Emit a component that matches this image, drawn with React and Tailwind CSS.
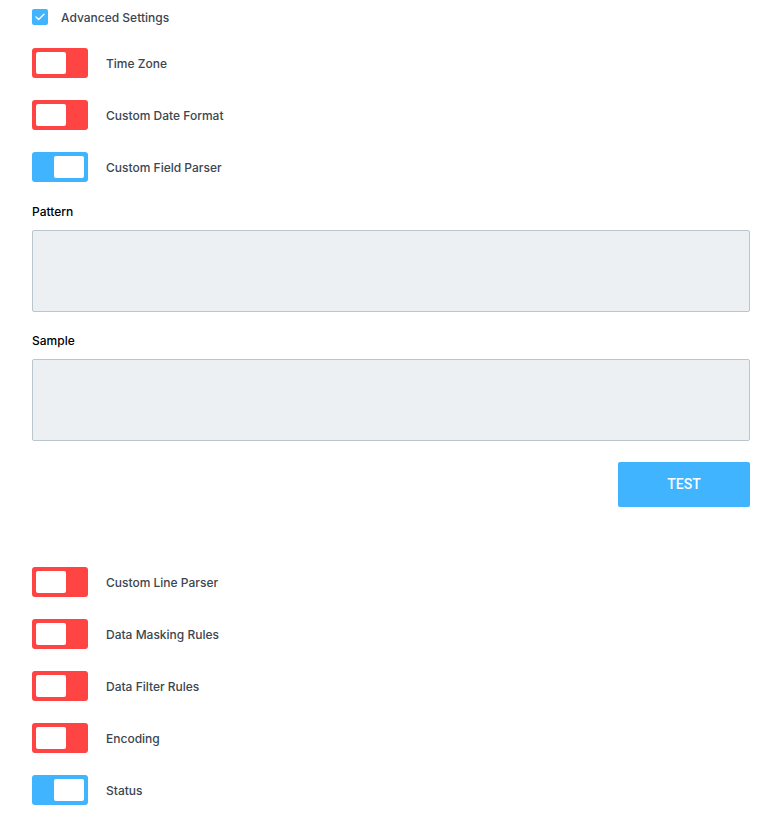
import React, { useState } from "react";

function Toggle({ on, label, onChange }) {
  return (
    <div className="flex items-center h-[30px]">
      <button
        onClick={onChange}
        className={
          "w-[56px] h-[30px] rounded-[3px] p-[4px] flex " +
          (on ? "bg-[#40b4ff] justify-end" : "bg-[#ff4444] justify-start")
        }
      >
        <span className="block w-[30px] h-[22px] bg-white rounded-[2px]" />
      </button>
      <span className="ml-[18px] mt-[1px] text-[12px] font-medium text-[#3b4650]">{label}</span>
    </div>
  );
}

export default function App() {
  const [flags, setFlags] = useState({
    tz: false,
    date: false,
    field: true,
    line: false,
    mask: false,
    filter: false,
    enc: false,
    status: true,
  });
  const flip = (k) => setFlags((f) => ({ ...f, [k]: !f[k] }));

  return (
    <div className="min-h-screen bg-white pl-8 pr-[28px] pt-[9px] pb-4 font-['Inter',sans-serif]">
      {/* Advanced settings checkbox */}
      <label className="flex items-center h-4">
        <span className="w-4 h-4 rounded-[2px] bg-[#40b4ff] flex items-center justify-center">
          <svg width="10" height="8" viewBox="0 0 10 8" fill="none">
            <path d="M1 4l2.6 2.6L9 1.2" stroke="white" strokeWidth="1.4" strokeLinecap="round" strokeLinejoin="round" />
          </svg>
        </span>
        <span className="ml-[13px] mt-[1px] text-[12px] font-medium text-[#3b4650]">Advanced Settings</span>
      </label>

      <div className="mt-[23px] flex flex-col gap-[22px]">
        <Toggle on={flags.tz} label="Time Zone" onChange={() => flip("tz")} />
        <Toggle on={flags.date} label="Custom Date Format" onChange={() => flip("date")} />
        <Toggle on={flags.field} label="Custom Field Parser" onChange={() => flip("field")} />
      </div>

      {/* Parser fields */}
      <div className="mt-[22px] text-[12px] font-medium text-black leading-4">Pattern</div>
      <textarea className="mt-[10px] block w-full h-[82px] bg-[#edf0f3] border border-[#b9c6cd] rounded-[2px] resize-none" />

      <div className="mt-[21px] text-[12px] font-medium text-black leading-4">Sample</div>
      <textarea className="mt-[10px] block w-full h-[82px] bg-[#edf0f3] border border-[#b9c6cd] rounded-[2px] resize-none" />

      <div className="flex justify-end mt-[21px]">
        <button className="w-[132px] h-[45px] bg-[#40b4ff] rounded-[2px] text-white text-[14px] font-medium font-['Roboto',sans-serif]">
          TEST
        </button>
      </div>

      <div className="mt-[60px] flex flex-col gap-[22px]">
        <Toggle on={flags.line} label="Custom Line Parser" onChange={() => flip("line")} />
        <Toggle on={flags.mask} label="Data Masking Rules" onChange={() => flip("mask")} />
        <Toggle on={flags.filter} label="Data Filter Rules" onChange={() => flip("filter")} />
        <Toggle on={flags.enc} label="Encoding" onChange={() => flip("enc")} />
        <Toggle on={flags.status} label="Status" onChange={() => flip("status")} />
      </div>
    </div>
  );
}
